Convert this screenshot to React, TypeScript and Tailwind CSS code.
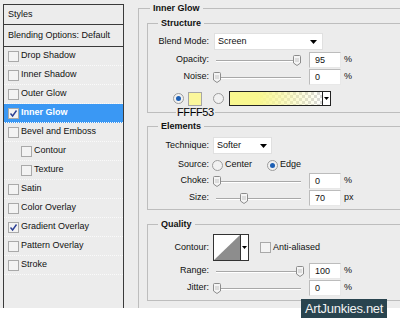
import React from "react";

const items = [
  { label: "Drop Shadow" },
  { label: "Inner Shadow" },
  { label: "Outer Glow" },
  { label: "Inner Glow", checked: true, active: true },
  { label: "Bevel and Emboss" },
  { label: "Contour", indent: true },
  { label: "Texture", indent: true },
  { label: "Satin" },
  { label: "Color Overlay" },
  { label: "Gradient Overlay", checked: true },
  { label: "Pattern Overlay" },
  { label: "Stroke" },
];

const Check = ({ checked = false }: { checked?: boolean }) => (
  <span className="flex h-[11px] w-[11px] shrink-0 items-center justify-center border border-[#a9a9a9] bg-[#f3f3f3]">
    {checked && (
      <svg width="9" height="9" viewBox="0 0 9 9">
        <path d="M1.5 4.5L3.6 7L7.5 1.5" stroke="#2b3f95" strokeWidth="1.4" fill="none" />
      </svg>
    )}
  </span>
);

const Radio = ({ on = false }: { on?: boolean }) => (
  <span className="flex h-[11px] w-[11px] shrink-0 items-center justify-center rounded-full border border-[#9c9c9c] bg-[#f1f1f1]">
    {on && <span className="h-[5px] w-[5px] rounded-full bg-[#1d5fb4]" />}
  </span>
);

const Arrow = () => (
  <svg width="7" height="4" viewBox="0 0 7 4">
    <path d="M0 0H7L3.5 4Z" fill="#000" />
  </svg>
);

const Thumb = () => (
  <svg width="8" height="11" viewBox="0 0 8 11">
    <path d="M1.5 0.5H6.5Q7.5 0.5 7.5 1.5V8L4 10.5L0.5 8V1.5Q0.5 0.5 1.5 0.5Z" fill="#f4f4f4" stroke="#8c8c8c" />
    <path d="M3 3V7M5 3V7" stroke="#c4c4c4" />
  </svg>
);

const Slider = ({ at }: { at: number }) => (
  <div className="relative ml-[7px] h-[11px] w-[85px]">
    <div className="absolute left-0 right-0 top-[5px] h-[2px] border-t border-b border-t-[#a8a8a8] border-b-white" />
    <div className="absolute top-0" style={{ left: at - 4 }}>
      <Thumb />
    </div>
  </div>
);

const Input = ({ value }: { value: string }) => (
  <div className="h-[16px] w-[32px] border border-t-[#bcbcbc] border-l-[#bcbcbc] border-r-[#e8e8e8] border-b-[#e8e8e8] bg-white pl-[5px] leading-[14px]">
    {value}
  </div>
);

const SliderRow = ({
  label,
  at,
  value,
  unit,
  className = "",
}: {
  label: string;
  at: number;
  value: string;
  unit: string;
  className?: string;
}) => (
  <div className={`flex h-[16px] items-center ${className}`}>
    <span className="w-[61px] text-right">{label}</span>
    <Slider at={at} />
    <div className="ml-[8px]">
      <Input value={value} />
    </div>
    <span className="ml-[3px]">{unit}</span>
  </div>
);

export default function App() {
  return (
    <div className="relative h-[331px] w-[400px] overflow-hidden bg-white font-['Liberation_Sans',Arial,sans-serif] text-[9px] text-[#111]">
      <div className="flex h-[308px] bg-[#ececec]">
        {/* styles list */}
        <div className="ml-[3px] mt-[4px] w-[121px] shrink-0 border-x border-t border-[#3a3a3a]">
          <div className="flex h-[20px] items-center border-b border-[#3a3a3a] pl-[4px]">Styles</div>
          <div className="flex h-[22px] items-center border-b border-[#3a3a3a] pl-[4px]">
            Blending Options: Default
          </div>
          {items.map((item) => (
            <div
              key={item.label}
              className={`flex h-[19px] items-center gap-[2px] border-b border-dotted border-[#fafafa] ${
                item.indent ? "pl-[17px]" : "pl-[4px]"
              } ${item.active ? "bg-[#3a98f4] font-bold text-white" : ""}`}
            >
              <Check checked={item.checked} />
              <span>{item.label}</span>
            </div>
          ))}
        </div>

        {/* settings */}
        <div className="h-[308px] flex-1 overflow-hidden">
          <fieldset className="ml-[14px] mt-[1px] h-[330px] w-[300px] border-l border-t border-[#bdbdbd]">
            <legend className="ml-[11px] px-[3px] font-bold leading-[14px]">Inner Glow</legend>

            <fieldset className="ml-[8px] mt-[1px] w-[280px] border border-[#bdbdbd] pb-[6px]">
              <legend className="ml-[10px] px-[3px] font-bold leading-[14px]">Structure</legend>
              <div className="mt-[3px] flex h-[17px] items-center">
                <span className="w-[61px] text-right">Blend Mode:</span>
                <div className="ml-[5px] flex h-[17px] w-[109px] items-center justify-between border border-[#e0e0e0] bg-white pl-[3px] pr-[5px]">
                  <span>Screen</span>
                  <Arrow />
                </div>
              </div>
              <SliderRow label="Opacity:" at={81} value="95" unit="%" className="mt-[2px]" />
              <SliderRow label="Noise:" at={1} value="0" unit="%" className="mt-[1px]" />
              <div className="mt-[6px] flex h-[15px] items-center pl-[25px]">
                <Radio on />
                <span className="ml-[4px] h-[14px] w-[14px] border border-[#a6a6a6] bg-[#fbf79b]" />
                <span className="ml-[11px]">
                  <Radio />
                </span>
                <div className="ml-[5px] flex h-[15px] w-[102px] border border-[#222]">
                  <div className="flex-1 bg-[repeating-conic-gradient(#d9d9d9_0_25%,#ffffff_0_50%)] bg-[length:6px_6px]">
                    <div className="h-full w-full bg-linear-to-r from-[#f9f78f] from-30% to-transparent" />
                  </div>
                  <div className="flex w-[8px] items-center justify-center border-l border-[#222] bg-white">
                    <svg width="5" height="3" viewBox="0 0 5 3">
                      <path d="M0 0H5L2.5 3Z" fill="#000" />
                    </svg>
                  </div>
                </div>
              </div>
            </fieldset>

            <fieldset className="ml-[8px] mt-[6px] w-[280px] border border-[#bdbdbd] pb-[3px]">
              <legend className="ml-[10px] px-[3px] font-bold leading-[14px]">Elements</legend>
              <div className="mt-[4px] flex h-[17px] items-center">
                <span className="w-[61px] text-right">Technique:</span>
                <div className="ml-[4px] flex h-[17px] w-[59px] items-center justify-between border border-[#e0e0e0] bg-white pl-[3px] pr-[4px]">
                  <span>Softer</span>
                  <Arrow />
                </div>
              </div>
              <div className="mt-[4px] flex h-[14px] items-center">
                <span className="w-[61px] text-right">Source:</span>
                <span className="ml-[3px]">
                  <Radio />
                </span>
                <span className="ml-[2px]">Center</span>
                <span className="ml-[15px]">
                  <Radio on />
                </span>
                <span className="ml-[2px]">Edge</span>
              </div>
              <SliderRow label="Choke:" at={1} value="0" unit="%" className="mt-[1px]" />
              <SliderRow label="Size:" at={28} value="70" unit="px" className="mt-[1px]" />
            </fieldset>

            <fieldset className="ml-[8px] mt-[7px] w-[280px] border border-[#bdbdbd] pb-[4px]">
              <legend className="ml-[10px] px-[3px] font-bold leading-[14px]">Quality</legend>
              <div className="mt-[3px] flex h-[27px] items-center">
                <span className="w-[61px] text-right">Contour:</span>
                <div className="ml-[4px] flex h-[27px] w-[36px] border border-[#333] bg-white">
                  <svg width="26" height="25" viewBox="0 0 26 25" className="block">
                    <path d="M0 25L26 0V25Z" fill="#8d8d8d" />
                  </svg>
                  <div className="flex flex-1 items-center justify-center border-l border-[#333]">
                    <svg width="5" height="3" viewBox="0 0 5 3">
                      <path d="M0 0H5L2.5 3Z" fill="#000" />
                    </svg>
                  </div>
                </div>
                <span className="ml-[11px]">
                  <Check />
                </span>
                <span className="ml-[2px]">Anti-aliased</span>
              </div>
              <SliderRow label="Range:" at={84} value="100" unit="%" className="mt-[2px]" />
              <SliderRow label="Jitter:" at={1} value="0" unit="%" className="mt-[1px]" />
            </fieldset>
          </fieldset>
        </div>
      </div>

      <span className="absolute left-[176px] top-[106px] bg-[#ececec] px-[1px] text-[11px] leading-[12px] tracking-[-0.4px] text-black">
        FFFF53
      </span>

      <div className="absolute left-[301px] top-[299px] flex h-[19px] w-[86px] items-center justify-center bg-[#29444f] text-[13px] tracking-[-0.3px] text-[#f2f2f2]">
        ArtJunkies.net
      </div>
    </div>
  );
}
